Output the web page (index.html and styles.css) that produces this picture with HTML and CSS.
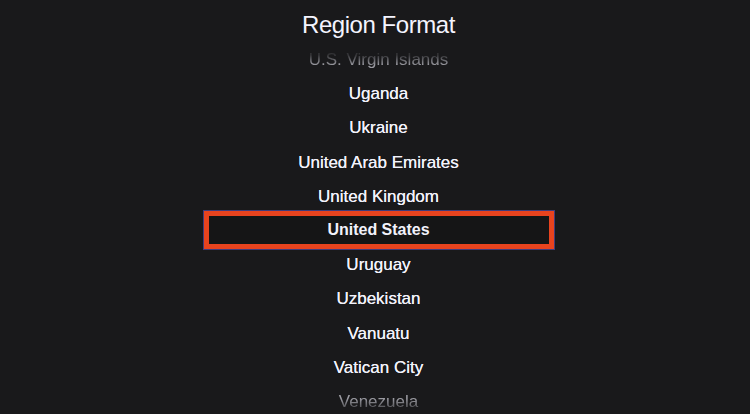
FILE: index.html
```html
<!DOCTYPE html>
<html lang="en">
<head>
    <meta charset="UTF-8" />
    <meta name="viewport" content="width=device-width, initial-scale=1.0" />
    <title>Region Format</title>
    <link rel="stylesheet" href="styles.css">
</head>
<body>
    <h1 class="title">Region Format</h1>
    <ul class="region-list">
        <li class="region faded-top">U.S. Virgin Islands</li>
        <li class="region">Uganda</li>
        <li class="region">Ukraine</li>
        <li class="region">United Arab Emirates</li>
        <li class="region">United Kingdom</li>
        <li class="region selected"><span class="focus-box">United States</span></li>
        <li class="region">Uruguay</li>
        <li class="region">Uzbekistan</li>
        <li class="region">Vanuatu</li>
        <li class="region">Vatican City</li>
        <li class="region faded-bottom">Venezuela</li>
    </ul>
</body>
</html>
```

FILE: styles.css
```css
html, body {
    height: 100%;
}
body {
    margin: 0;
    padding-left: 7px;
    background-color: #19191b;
    color: #f2f2fb;
    font-family: 'Liberation Sans', Arial, sans-serif;
    overflow: hidden;
}
.title {
    margin: 0;
    padding-top: 11px;
    height: 32px;
    font-size: 24px;
    line-height: 28px;
    letter-spacing: -0.45px;
    font-weight: normal;
    text-align: center;
    color: #f4f4ff;
}
.region-list {
    list-style: none;
    margin: 0;
    padding: 0;
}
.region {
    height: 34.2px;
    display: flex;
    align-items: center;
    justify-content: center;
    font-size: 17px;
    text-shadow: 0 0 0.4px #f2f2fb;
}
.faded-top, .faded-bottom {
    color: #9a9aa1;
    text-shadow: none;
}
.faded-top {
    -webkit-mask-image: linear-gradient(to bottom, rgba(0, 0, 0, 0.2) 35%, #000 65%);
    mask-image: linear-gradient(to bottom, rgba(0, 0, 0, 0.2) 35%, #000 65%);
}
.faded-bottom {
    -webkit-mask-image: linear-gradient(to bottom, #000 40%, rgba(0, 0, 0, 0.3) 75%);
    mask-image: linear-gradient(to bottom, #000 40%, rgba(0, 0, 0, 0.3) 75%);
}
.selected {
    font-size: 16px;
    font-weight: bold;
    text-shadow: none;
}
.focus-box {
    display: flex;
    align-items: center;
    justify-content: center;
    width: 350px;
    height: 38px;
    margin: -3px 0 -1px;
    box-sizing: border-box;
    border: 5px solid #e8431e;
    background-color: #151516;
    outline: 1px solid rgba(98, 88, 200, 0.55);
}
```
